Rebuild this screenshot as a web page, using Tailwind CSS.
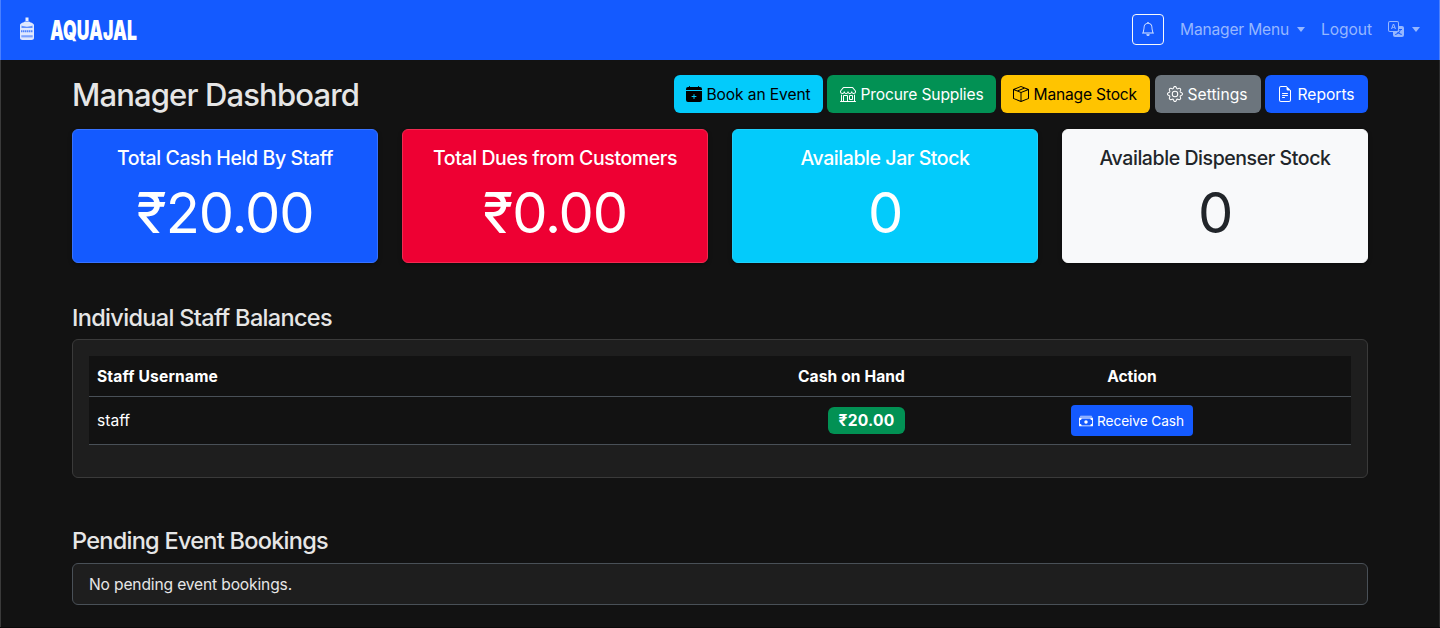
<!DOCTYPE html>
<html lang="en">
<head>
<meta charset="utf-8">
<title>Manager Dashboard</title>
<script src="https://cdn.jsdelivr.net/npm/@tailwindcss/browser@4"></script>
</head>
<body class="h-[628px] overflow-hidden bg-[#121212] font-['Inter','Liberation_Sans',sans-serif] text-[15.6px] leading-6 text-[#e6e6e6]">
<div class="h-[628px] border-b border-[#0a0a0a] shadow-[inset_1px_0_0_#3a3a3a,inset_-1px_0_0_#2a2a2a]">
<nav class="flex h-[60px] items-center justify-between bg-[#145aff] pl-[17px] pr-5 shadow-[inset_1px_0_0_#4a80ff,inset_-1px_0_0_#4a80ff]">
  <a class="flex items-center">
    <svg class="mb-0.5 mr-[13px] h-[24px] w-[20px]" viewBox="0 0 20 24">
      <path d="M8.500.500h3v3.500h-3z" fill="#e8efff"/>
      <path d="M8 4.500h4c1 1 4.600 1.300 5 3.500v13c0 1.300-1 2-2.500 2h-9C4 23 3 22.300 3 21V8c.4-2.200 4-2.500 5-3.500z" fill="#dfe8ff"/>
      <path d="M4.500 8.500c3 1.500 8 1.500 11 0V11h-11z" fill="#5f90ff"/>
      <path d="M4 14.200h12" stroke="#4f84ff" stroke-width="2" stroke-dasharray="1.500 .5"/>
      <path d="M4.300 18.200h11.400v2.200H4.300z" fill="#7ba3ff"/>
    </svg>
    <span class="w-[90px] text-[25px] font-black text-white"><span class="inline-block origin-left scale-x-[.7] scale-y-110">AQUAJAL</span></span>
  </a>
  <div class="flex items-center text-[#96b7ff]">
    <button class="mr-4 mb-px flex h-[31px] w-8 items-center justify-center rounded border border-[#f8f9fa] text-[#dfe9ff]">
      <svg class="mb-px size-3.5" viewBox="0 0 16 16" fill="currentColor"><path d="M8 16a2 2 0 0 0 2-2H6a2 2 0 0 0 2 2M8 1.918l-.797.161A4 4 0 0 0 4 6c0 .628-.134 2.197-.459 3.742-.16.767-.376 1.566-.663 2.258h10.244c-.287-.692-.502-1.490-.663-2.258C12.134 8.197 12 6.628 12 6a4 4 0 0 0-3.203-3.920zM14.220 12c.223.447.481.801.780 1H1c.299-.199.557-.553.780-1C2.680 10.200 3 6.880 3 6c0-2.420 1.720-4.440 4.005-4.901a1 1 0 1 1 1.990 0A5 5 0 0 1 13 6c0 .880.320 4.200 1.220 6"/></svg>
    </button>
    <span class="tracking-[-.195px]">Manager Menu</span>
    <span class="mb-px ml-2 mr-4 border-x-[4.500px] border-t-[5px] border-x-transparent border-t-[#96b7ff]"></span>
    <span class="mr-4 tracking-[-.07px]">Logout</span>
    <svg class="mb-0.5 size-4" viewBox="0 0 16 16" fill="currentColor"><path d="M4.545 6.714 4.110 8H3l1.862-5h1.284L8 8H6.833l-.435-1.286zm1.634-.736L5.500 3.956h-.049l-.679 2.022z"/><path fill-rule="evenodd" d="M0 2a2 2 0 0 1 2-2h7a2 2 0 0 1 2 2v3h3a2 2 0 0 1 2 2v7a2 2 0 0 1-2 2H7a2 2 0 0 1-2-2v-3H2a2 2 0 0 1-2-2zm2-1a1 1 0 0 0-1 1v7a1 1 0 0 0 1 1h7a1 1 0 0 0 1-1V2a1 1 0 0 0-1-1zm7.138 9.995q.289.451.630.846c-.748.575-1.673 1.001-2.768 1.292.178.217.451.635.555.867 1.125-.359 2.080-.844 2.886-1.494.777.665 1.739 1.165 2.930 1.472.133-.254.414-.673.629-.890-1.125-.253-2.057-.694-2.820-1.284.681-.747 1.222-1.651 1.621-2.757H14V8h-3v1.047h.765c-.318.844-.740 1.546-1.272 2.130a6 6 0 0 1-.415-.492 2 2 0 0 1-.940.310"/></svg>
    <span class="mb-px ml-2 border-x-[4.500px] border-t-[5px] border-x-transparent border-t-[#96b7ff]"></span>
  </div>
</nav>
<main class="mx-[72px]">
  <header class="flex h-[69px] items-start justify-between pt-[15px]">
    <h1 class="text-[31px] font-medium leading-[40px] tracking-[-.853px]">Manager Dashboard</h1>
    <div class="flex gap-1">
      <button class="flex h-[38px] w-[149px] items-center gap-[4.500px] rounded-md bg-[#03cbfb] pl-3 text-black"><svg class="size-4 shrink-0" viewBox="0 0 16 16" fill="currentColor"><path d="M4 .5a.5.500 0 0 0-1 0V1H2a2 2 0 0 0-2 2v1h16V3a2 2 0 0 0-2-2h-1V.5a.5.500 0 0 0-1 0V1H4zM16 14V5H0v9a2 2 0 0 0 2 2h12a2 2 0 0 0 2-2M8.500 8.500V10H10a.5.500 0 0 1 0 1H8.500v1.500a.5.500 0 0 1-1 0V11H6a.5.500 0 0 1 0-1h1.500V8.500a.5.500 0 0 1 1 0"/></svg><span class="whitespace-nowrap pt-px tracking-[-.112px]">Book an Event</span></button>
      <button class="mr-px flex h-[38px] w-[169px] items-center gap-[4.500px] rounded-md bg-[#029154] pl-[13px] text-white"><svg class="size-4 shrink-0" viewBox="0 0 16 16" fill="currentColor"><path d="M2.970 1.350A1 1 0 0 1 3.730 1h8.540a1 1 0 0 1 .760.350l2.609 3.044A1.500 1.500 0 0 1 16 5.370v.255a2.375 2.375 0 0 1-4.250 1.458A2.370 2.370 0 0 1 9.875 8 2.370 2.370 0 0 1 8 7.083 2.370 2.370 0 0 1 6.125 8a2.370 2.370 0 0 1-1.875-.917A2.375 2.375 0 0 1 0 5.625V5.370a1.500 1.500 0 0 1 .361-.976zm1.780 4.275a1.375 1.375 0 0 0 2.750 0 .5.500 0 0 1 1 0 1.375 1.375 0 0 0 2.750 0 .5.500 0 0 1 1 0 1.375 1.375 0 1 0 2.750 0V5.370a.5.500 0 0 0-.120-.325L12.270 2H3.730L1.120 5.045A.5.500 0 0 0 1 5.370v.255a1.375 1.375 0 0 0 2.750 0 .5.500 0 0 1 1 0M1.500 8.500A.5.500 0 0 1 2 9v6h1v-5a1 1 0 0 1 1-1h3a1 1 0 0 1 1 1v5h6V9a.5.500 0 0 1 1 0v6h.5a.5.500 0 0 1 0 1H.5a.5.500 0 0 1 0-1H1V9a.5.500 0 0 1 .5-.5M4 15h3v-5H4zm5-5a1 1 0 0 1 1-1h2a1 1 0 0 1 1 1v3a1 1 0 0 1-1 1h-2a1 1 0 0 1-1-1zm3 0h-2v3h2z"/></svg><span class="whitespace-nowrap pt-px tracking-[-.146px]">Procure Supplies</span></button>
      <button class="mr-px flex h-[38px] w-[149px] items-center gap-[4.500px] rounded-md bg-[#ffc400] pl-3 text-black"><svg class="size-4 shrink-0" viewBox="0 0 16 16" fill="currentColor"><path d="M8.186 1.113a.5.500 0 0 0-.372 0L1.846 3.500l2.404.961L10.404 2zm3.564 1.426L5.596 5 8 5.961 14.154 3.500zm3.250 1.700-6.500 2.600v7.922l6.500-2.600V4.240zM7.500 14.762V6.838L1 4.239v7.923zM7.443.184a1.500 1.500 0 0 1 1.114 0l7.129 2.852A.5.500 0 0 1 16 3.500v8.662a1 1 0 0 1-.629.928l-7.185 2.874a.5.500 0 0 1-.372 0L.630 13.090a1 1 0 0 1-.630-.928V3.500a.5.500 0 0 1 .314-.464z"/></svg><span class="whitespace-nowrap pt-px tracking-[-.18px]">Manage Stock</span></button>
      <button class="flex h-[38px] w-[106px] items-center gap-[4.500px] rounded-md bg-[#6c757d] pl-3 text-white"><svg class="size-4 shrink-0" viewBox="0 0 16 16" fill="currentColor"><path d="M8 4.754a3.246 3.246 0 1 0 0 6.492 3.246 3.246 0 0 0 0-6.492M5.754 8a2.246 2.246 0 1 1 4.492 0 2.246 2.246 0 0 1-4.492 0"/><path d="M9.796 1.343c-.527-1.790-3.065-1.790-3.592 0l-.094.319a.873.873 0 0 1-1.255.520l-.292-.160c-1.640-.892-3.433.902-2.540 2.541l.159.292a.873.873 0 0 1-.520 1.255l-.319.094c-1.790.527-1.790 3.065 0 3.592l.319.094a.873.873 0 0 1 .520 1.255l-.160.292c-.892 1.640.901 3.434 2.541 2.540l.292-.159a.873.873 0 0 1 1.255.520l.094.319c.527 1.790 3.065 1.790 3.592 0l.094-.319a.873.873 0 0 1 1.255-.520l.292.160c1.640.893 3.434-.902 2.540-2.541l-.159-.292a.873.873 0 0 1 .520-1.255l.319-.094c1.790-.527 1.790-3.065 0-3.592l-.319-.094a.873.873 0 0 1-.520-1.255l.160-.292c.893-1.640-.902-3.433-2.541-2.540l-.292.159a.873.873 0 0 1-1.255-.520zm-2.633.283c.246-.835 1.428-.835 1.674 0l.094.319a1.873 1.873 0 0 0 2.693 1.115l.291-.160c.764-.415 1.600.420 1.184 1.185l-.159.292a1.873 1.873 0 0 0 1.116 2.692l.318.094c.835.246.835 1.428 0 1.674l-.319.094a1.873 1.873 0 0 0-1.115 2.693l.160.291c.415.764-.420 1.600-1.185 1.184l-.291-.159a1.873 1.873 0 0 0-2.693 1.116l-.094.318c-.246.835-1.428.835-1.674 0l-.094-.319a1.873 1.873 0 0 0-2.692-1.115l-.292.160c-.764.415-1.600-.420-1.184-1.185l.159-.291A1.873 1.873 0 0 0 1.945 8.930l-.319-.094c-.835-.246-.835-1.428 0-1.674l.319-.094A1.873 1.873 0 0 0 3.060 4.377l-.160-.292c-.415-.764.420-1.600 1.185-1.184l.292.159a1.873 1.873 0 0 0 2.692-1.115z"/></svg><span class="whitespace-nowrap pt-px tracking-[.037px]">Settings</span></button>
      <button class="flex h-[38px] w-[103px] items-center gap-[4.500px] rounded-md bg-[#145aff] pl-3 text-white"><svg class="size-4 shrink-0" viewBox="0 0 16 16" fill="currentColor"><path d="M5.500 7a.5.500 0 0 0 0 1h5a.5.500 0 0 0 0-1zM5 9.500a.5.500 0 0 1 .5-.5h5a.5.500 0 0 1 0 1h-5a.5.500 0 0 1-.5-.5m0 2a.5.500 0 0 1 .5-.5h2a.5.500 0 0 1 0 1h-2a.5.500 0 0 1-.5-.5"/><path d="M9.500 0H4a2 2 0 0 0-2 2v12a2 2 0 0 0 2 2h8a2 2 0 0 0 2-2V4.500zm0 1v2A1.500 1.500 0 0 0 11 4.500h2V14a1 1 0 0 1-1 1H4a1 1 0 0 1-1-1V2a1 1 0 0 1 1-1z"/></svg><span class="whitespace-nowrap pt-px">Reports</span></button>
    </div>
  </header>
  <section class="grid grid-cols-4 gap-6 text-center text-white">
    <div class="h-[134px] rounded-md border border-[#3772ff] bg-[#145aff] pt-4 shadow-[0_2px_4px_rgba(0,0,0,.3)]"><h5 class="text-[19.500px] font-medium tracking-[-.396px]">Total Cash Held By Staff</h5><p class="mt-2.5 text-[56px] leading-[67px] tracking-[-1.100px]">₹20.00</p></div>
    <div class="h-[134px] rounded-md border border-[#f02a50] bg-[#ee0033] pt-4 shadow-[0_2px_4px_rgba(0,0,0,.3)]"><h5 class="text-[19.500px] font-medium tracking-[-.412px]">Total Dues from Customers</h5><p class="mt-2.5 text-[56px] leading-[67px] tracking-[-1.100px]">₹0.00</p></div>
    <div class="h-[134px] rounded-md border border-[#1fd0fb] bg-[#03cbfb] pt-4 shadow-[0_2px_4px_rgba(0,0,0,.3)]"><h5 class="text-[19.500px] font-medium tracking-[-.431px]">Available Jar Stock</h5><p class="mt-2.5 text-[56px] leading-[67px] tracking-[-1.100px]">0</p></div>
    <div class="h-[134px] rounded-md border border-[#f8f9fa] bg-[#f8f9fa] pt-4 text-[#212529] shadow-[0_2px_4px_rgba(0,0,0,.3)]"><h5 class="text-[19.500px] font-medium tracking-[-.424px]">Available Dispenser Stock</h5><p class="mt-2.5 text-[56px] leading-[67px] tracking-[-1.100px]">0</p></div>
  </section>
  <h3 class="mt-10 pb-[7px] text-[23.500px] font-medium leading-[29px] tracking-[-.664px]">Individual Staff Balances</h3>
  <section class="h-[139px] rounded-md border border-[#3a3a3a] bg-[#1e1e1e] p-4">
    <div class="bg-[#121212] text-white">
      <div class="grid h-[41px] grid-cols-[824px_438px] items-center border-b border-[#495057] pt-px font-bold">
        <div class="flex justify-between px-2"><span class="tracking-[.164px]">Staff Username</span><span class="tracking-[.089px]">Cash on Hand</span></div>
        <div class="text-center">Action</div>
      </div>
      <div class="grid h-12 grid-cols-[824px_438px] items-center border-b border-[#495057]">
        <div class="flex items-center justify-between px-2"><span class="pt-px">staff</span><span class="flex h-[27px] w-[77px] items-center justify-center rounded-md bg-[#029154] pt-px font-bold tracking-[.237px]">₹20.00</span></div>
        <div class="flex justify-center"><button class="flex h-[31px] w-[122px] items-center gap-1 rounded bg-[#145aff] pl-2 text-[13.700px]"><svg class="size-3.5 shrink-0" viewBox="0 0 16 16" fill="currentColor"><path d="M1 3a1 1 0 0 1 1-1h12a1 1 0 0 1 1 1z" opacity=".7"/><path d="M8 11a2 2 0 1 0 0-4 2 2 0 0 0 0 4"/><path d="M0 5a1 1 0 0 1 1-1h14a1 1 0 0 1 1 1v8a1 1 0 0 1-1 1H1a1 1 0 0 1-1-1zm3 0a2 2 0 0 1-2 2v4a2 2 0 0 1 2 2h10a2 2 0 0 1 2-2V7a2 2 0 0 1-2-2z"/></svg><span class="whitespace-nowrap tracking-[-.081px]">Receive Cash</span></button></div>
      </div>
    </div>
  </section>
  <h3 class="mt-12 pb-2 text-[23.500px] font-medium leading-[29px] tracking-[-.725px]">Pending Event Bookings</h3>
  <div class="flex h-[42px] items-center rounded-md border border-[#495057] bg-[#1e1e1e] px-4 pt-px tracking-[-.152px]">No pending event bookings.</div>
</main>
</div>
</body>
</html>
